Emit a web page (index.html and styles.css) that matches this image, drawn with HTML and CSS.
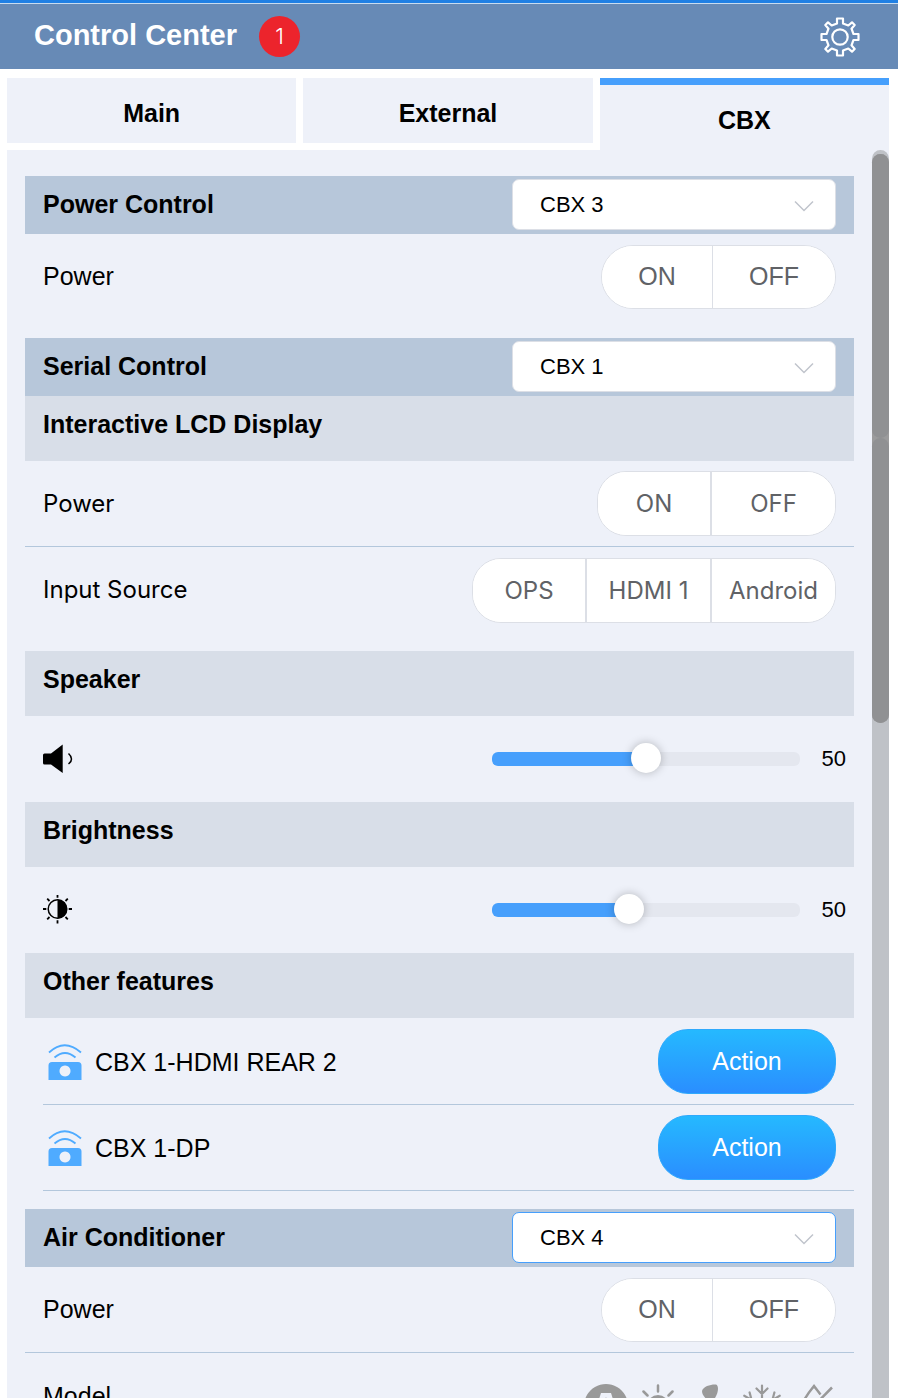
FILE: index.html
```html
<!DOCTYPE html>
<html lang="en">
<head>
<meta charset="utf-8">
<meta name="viewport" content="width=device-width, initial-scale=1">
<title>Control Center</title>
<link rel="stylesheet" href="styles.css">
</head>
<body>
<svg class="sprite" aria-hidden="true">
  <symbol id="chevron" viewBox="0 0 20 12"><path d="M1 1.500 10 10.500 19 1.500" fill="none" stroke="#c0c4cc" stroke-width="1.500"/></symbol>
  <symbol id="remote" viewBox="0 0 34 36">
    <path d="M1 8.500Q16.500-6 33 8.500M6.500 13.500Q17 4.500 27.500 13.500" fill="none" stroke="#4fabff" stroke-width="1.800"/>
    <path fill-rule="evenodd" fill="#4fabff" d="M.5 36V21.500Q.5 18 4 18H30Q33.500 18 33.500 21.500V36ZM17 21.500a5.500 5.500 0 1 0 .01 0Z"/>
  </symbol>
</svg>

<header class="header">
  <h1 class="title">Control Center</h1>
  <span class="badge">1</span>
  <button class="settings" type="button" aria-label="Settings">
    <svg viewBox="-20 -20 40 40" width="40" height="40" fill="none" stroke="#fff" stroke-width="2.200" stroke-linejoin="round">
      <path d="M-3-18.500H3V-13.500L8.300-11.500 12-14.700 14.700-12 11.500-8.300 13.500-3H18.500V3H13.500L11.500 8.300 14.700 12 12 14.700 8.300 11.500 3 13.500V18.500H-3V13.500L-8.300 11.500-12 14.700-14.700 12-11.500 8.300-13.500 3H-18.500V-3H-13.500L-11.500-8.300-14.700-12-12-14.700-8.300-11.500-3-13.500Z"/>
      <circle r="7.700"/>
    </svg>
  </button>
</header>

<nav class="tabs">
  <button class="tab" type="button">Main</button>
  <button class="tab" type="button">External</button>
  <button class="tab tab-active" type="button" aria-current="page">CBX</button>
</nav>

<main class="panel">
  <div class="content">
    <section class="section">
      <div class="bar">
        <h2 class="heading" id="power-control">Power Control</h2>
        <div class="picker">
          <select class="select" aria-labelledby="power-control"><option>CBX 1</option><option selected>CBX 3</option><option>CBX 4</option></select>
          <svg class="chevron" width="20" height="12"><use href="#chevron"/></svg>
        </div>
      </div>
      <div class="row">
        <span class="label">Power</span>
        <div class="group"><button class="option narrow" type="button">ON</button><button class="option wide" type="button">OFF</button></div>
      </div>
    </section>

    <section class="section">
      <div class="bar">
        <h2 class="heading" id="serial-control">Serial Control</h2>
        <div class="picker">
          <select class="select" aria-labelledby="serial-control"><option selected>CBX 1</option><option>CBX 3</option><option>CBX 4</option></select>
          <svg class="chevron" width="20" height="12"><use href="#chevron"/></svg>
        </div>
      </div>
      <h3 class="subheading">Interactive LCD Display</h3>
      <div class="row row-serial divided">
        <span class="label">Power</span>
        <div class="group"><button class="option narrow" type="button">ON</button><button class="option wide" type="button">OFF</button></div>
      </div>
      <div class="row row-serial">
        <span class="label">Input Source</span>
        <div class="group"><button class="option narrow" type="button">OPS</button><button class="option wide" type="button">HDMI 1</button><button class="option wide" type="button">Android</button></div>
      </div>
    </section>

    <section>
      <h3 class="subheading" id="speaker">Speaker</h3>
      <div class="row row-slider">
        <svg width="30" height="30" viewBox="0 0 30 30">
          <path d="M0 11Q0 9.500 1.500 9.500H8L19.700.5V29L8 20.500H1.500Q0 20.500 0 19Z"/>
          <path d="M25.500 9.500Q31.500 15 25.500 20" fill="none" stroke="#000" stroke-width="1.500"/>
        </svg>
        <div class="level">
          <input class="slider" type="range" min="0" max="100" value="50" style="--fill:50%" aria-labelledby="speaker">
          <output class="value">50</output>
        </div>
      </div>
      <h3 class="subheading" id="brightness">Brightness</h3>
      <div class="row row-slider">
        <svg width="30" height="30" viewBox="-14.500 -14 30 30">
          <circle r="9.300" fill="none" stroke="#000" stroke-width="1.500"/>
          <path d="M0-9.500A9.500 9.500 0 0 1 0 9.500Z"/>
          <path d="M0-14V-11.200M0 11.200V14.500M-14.500 0H-11.200M11.200 0H14.500M-10.300-10.300-8-8M8-8 10.300-10.300M-10.300 10.300-8 8M8 8 10.300 10.300" stroke="#000" stroke-width="1.800"/>
        </svg>
        <div class="level">
          <input class="slider" type="range" min="0" max="100" value="44" style="--fill:44%" aria-labelledby="brightness">
          <output class="value">50</output>
        </div>
      </div>
    </section>

    <section class="section">
      <h3 class="subheading">Other features</h3>
      <ul class="features">
        <li class="feature divided">
          <svg width="34" height="36"><use href="#remote"/></svg>
          <span class="feature-name">CBX 1-HDMI REAR 2</span>
          <button class="action" type="button">Action</button>
        </li>
        <li class="feature divided">
          <svg width="34" height="36"><use href="#remote"/></svg>
          <span class="feature-name">CBX 1-DP</span>
          <button class="action" type="button">Action</button>
        </li>
      </ul>
    </section>

    <section class="section">
      <div class="bar">
        <h2 class="heading" id="air">Air Conditioner</h2>
        <div class="picker">
          <select class="select select-active" aria-labelledby="air"><option>CBX 1</option><option>CBX 3</option><option selected>CBX 4</option></select>
          <svg class="chevron" width="20" height="12"><use href="#chevron"/></svg>
        </div>
      </div>
      <div class="row divided">
        <span class="label">Power</span>
        <div class="group"><button class="option narrow" type="button">ON</button><button class="option wide" type="button">OFF</button></div>
      </div>
      <div class="row row-model">
        <span class="label">Model</span>
        <div class="modes">
          <button class="mode" type="button" aria-label="Auto"><svg viewBox="0 0 44 44"><path fill="#999" fill-rule="evenodd" d="M22 0a22 22 0 1 0 .01 0ZM17 9H27L35 34H29L27.500 28H16.500L15 34H9ZM22 13 18 24H26Z"/></svg></button>
          <button class="mode" type="button" aria-label="Heat"><svg viewBox="0 0 44 44" stroke="#999" stroke-width="2.500" stroke-linecap="round"><circle cx="22" cy="22" r="11" fill="#999" stroke="none"/><path d="M22 1.500V7.500M22 36.500V42.500M1.500 22H7.500M36.500 22H42.500M7.500 7.500 11.500 11.500M32.500 11.500 36.500 7.500M7.500 36.500 11.500 32.500M32.500 32.500 36.500 36.500"/></svg></button>
          <button class="mode" type="button" aria-label="Fan"><svg viewBox="0 0 44 44" fill="#999"><path id="blade" d="M22 20C19 15 14 12 14 7C15 2 24 0 28 .5C32 2 30 13 22 20Z"/><use href="#blade" transform="rotate(120 22 22)"/><use href="#blade" transform="rotate(240 22 22)"/></svg></button>
          <button class="mode" type="button" aria-label="Cool"><svg viewBox="0 0 44 44" fill="none" stroke="#999" stroke-width="2.200" stroke-linecap="round"><g id="flake"><path d="M22 22V1.500M16.500 4.500 22 10 27.500 4.500M22 22V42.500M16.500 39.500 22 34 27.500 39.500"/></g><use href="#flake" transform="rotate(60 22 22)"/><use href="#flake" transform="rotate(120 22 22)"/></svg></button>
          <button class="mode" type="button" aria-label="Dry"><svg viewBox="0 0 44 44" fill="none" stroke="#999" stroke-width="2.500"><path d="M28.500 10.500 22 2Q4 24 9 34Q15 43 26 41Q38 37 34 23M40 3.500 12 32"/></svg></button>
        </div>
      </div>
    </section>
  </div>
  <div class="scrollbar"><div class="thumb" style="height:45.7%"><span class="thumb-part"></span><span class="thumb-part"></span></div></div>
</main>
</body>
</html>
```

FILE: styles.css
```css
* {
  box-sizing: border-box;
}

body {
  margin: 0;
  height: 100vh;
  display: flex;
  flex-direction: column;
  overflow: hidden;
  background: #fff;
  color: #000;
  font: 25px/30px "Liberation Sans", Arial, sans-serif;
}

button,
select {
  font: inherit;
  color: inherit;
  margin: 0;
}

h1, h2, h3, ul {
  margin: 0;
  padding: 0;
}

.sprite {
  position: absolute;
  width: 0;
  height: 0;
}

.header {
  flex: none;
  display: flex;
  align-items: center;
  height: 69px;
  padding: 1px 38px 0 34px;
  border-top: 3px solid #2080e4;
  box-shadow: inset 0 1px #c8dcf0;
  background: #678ab6;
  color: #fff;
}

.title {
  font-size: 29px;
  line-height: 34px;
  padding-bottom: 3px;
}

.badge {
  width: 41px;
  height: 41px;
  margin-left: 22px;
  border-radius: 50%;
  background: #ec242c;
  font: 300 22px/41px Inter, sans-serif;
  text-align: center;
}

.settings {
  margin-left: auto;
  padding: 0;
  border: 0;
  background: none;
}

.settings svg {
  display: block;
}

.tabs {
  flex: none;
  display: grid;
  grid-template-columns: repeat(3, 1fr);
  align-items: start;
  gap: 7px;
  margin: 9px 9px 0 7px;
}

.tab {
  height: 65px;
  margin-bottom: 7px;
  padding: 4px 0 0;
  border: 0;
  background: #eef1f9;
  font-weight: bold;
}

.tab-active {
  height: 72px;
  margin-bottom: 0;
  border-top: 7px solid #469ffc;
}

.panel {
  flex: 1;
  min-height: 0;
  display: flex;
  justify-content: space-between;
  gap: 18px;
  margin: 0 9px 0 7px;
  padding-left: 18px;
  overflow: hidden;
  background: #eef1f9;
}

.content {
  flex: 1;
  padding-top: 26px;
}

.section {
  margin-bottom: 18px;
}

.bar {
  display: flex;
  align-items: center;
  justify-content: space-between;
  height: 58px;
  padding: 0 18px 2px;
  background: #b7c7da;
}

.heading,
.subheading {
  font-size: 25px;
  line-height: 30px;
}

.subheading {
  height: 65px;
  padding: 13px 18px;
  background: #d8dee8;
}

.picker {
  position: relative;
  width: 324px;
}

.select {
  display: block;
  width: 100%;
  height: 51px;
  padding: 1px 50px 0 27px;
  border: 1px solid #dcdfe6;
  border-radius: 7px;
  appearance: none;
  background: #fff;
  font-size: 22px;
}

.select-active {
  border-color: #469ffc;
}

.chevron {
  position: absolute;
  right: 22px;
  top: 21px;
  pointer-events: none;
}

.row {
  display: flex;
  align-items: center;
  justify-content: space-between;
  height: 86px;
  padding: 0 18px;
}

.divided {
  border-bottom: 1px solid #b3c7dc;
}

.label {
  padding-bottom: 2px;
}

.group {
  display: flex;
  height: 64px;
  border: 1px solid #dcdfe6;
  border-radius: 32px;
  overflow: hidden;
  background: #fff;
}

.option {
  padding: 0 0 2px;
  border: 0;
  background: #fff;
  color: #606266;
}

.option + .option {
  border-left: 1px solid #dcdfe6;
}

.narrow {
  width: 110px;
}

.wide {
  width: 123px;
}

.row-serial {
  font-family: Inter, sans-serif;
  font-size: 24px;
}

.row-serial .label {
  padding-bottom: 0;
}

.row-serial .group {
  height: 65px;
  border-radius: 29px;
}

.row-serial .option {
  padding: 1px 0 0;
}

.row-serial .option + .option {
  border-left-width: 2px;
}

.row-serial .narrow {
  width: 112px;
}

.row-serial .wide {
  width: 125px;
}

.row-slider {
  padding-right: 8px;
}

.level {
  display: flex;
  align-items: center;
  gap: 22px;
  font-size: 22px;
}

.slider {
  --track: 14px;
  width: 308px;
  height: 30px;
  margin: 0;
  appearance: none;
  background: none;
}

.slider::-webkit-slider-runnable-track {
  height: var(--track);
  border-radius: 6px;
  background: linear-gradient(to right, #469ffc var(--fill), #e4e7ef var(--fill));
}

.slider::-webkit-slider-thumb {
  appearance: none;
  width: 30px;
  height: 30px;
  margin-top: -9px;
  border-radius: 50%;
  background: #fff;
  box-shadow: 0 0 10px rgba(0, 0, 0, 0.25);
}

.features {
  padding: 1px 0 0 18px;
  list-style: none;
}

.feature {
  display: flex;
  align-items: center;
  height: 86px;
  padding: 0 18px 0 5px;
}

.feature-name {
  flex: 1;
  margin-left: 13px;
}

.action {
  width: 178px;
  height: 65px;
  padding: 0 0 2px;
  border: 1px solid #2fa9fc;
  border-radius: 30px;
  background: linear-gradient(#25b9ff, #2a8eff);
  color: #fff;
}

.row-model {
  align-items: flex-start;
  padding-top: 28px;
}

.modes {
  display: flex;
  gap: 8px;
  padding-top: 3px;
}

.mode {
  width: 44px;
  height: 44px;
  padding: 0;
  border: 0;
  background: none;
}

.mode svg {
  display: block;
  width: 44px;
  height: 44px;
}

.scrollbar {
  flex: none;
  width: 17px;
  padding-top: 4px;
  border-radius: 9px 9px 0 0;
  background: #bfc2c7;
}

.thumb {
  display: flex;
  flex-direction: column;
  border-radius: 9px;
  background: #9b9b9c;
}

.thumb-part {
  flex: 1;
  border-radius: 9px;
  background: #909193;
}
```
